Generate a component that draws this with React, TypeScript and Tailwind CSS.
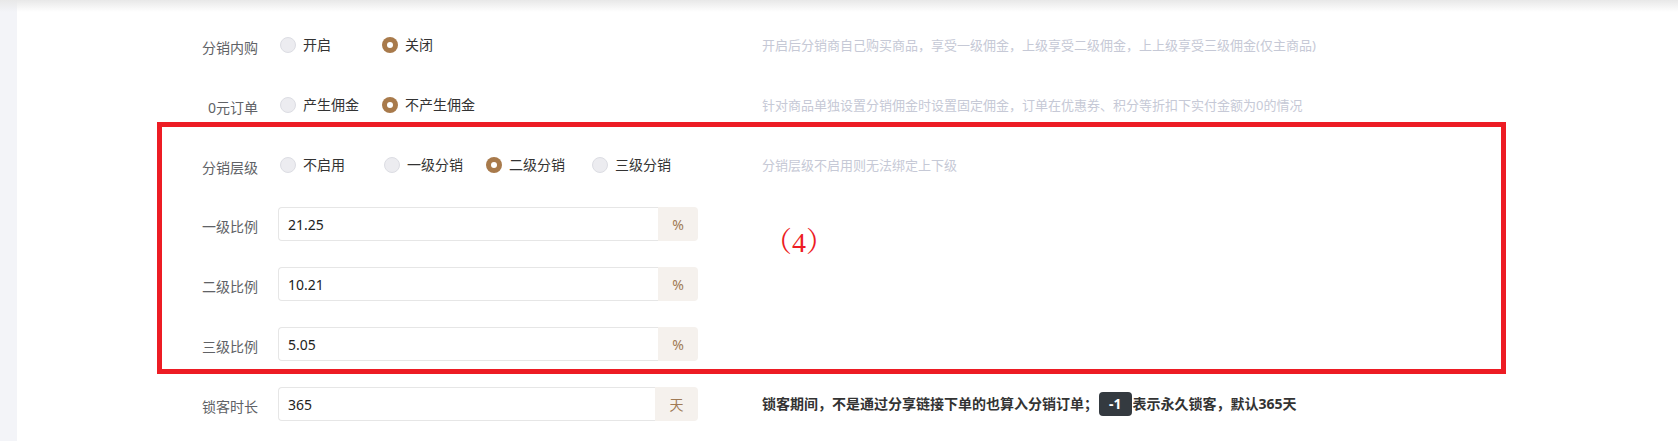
import React from "react";

function Radio({ checked, label, w }: { checked?: boolean; label: string; w: string }) {
  return (
    <div className={`flex items-center gap-[7px] shrink-0 ${w}`}>
      {checked ? (
        <span className="w-4 h-4 rounded-full bg-[#a87a4b] flex items-center justify-center">
          <span className="w-[6px] h-[6px] rounded-full bg-white" />
        </span>
      ) : (
        <span className="w-4 h-4 rounded-full bg-[#ececf0] border border-[#dcdde3]" />
      )}
      <span className="text-[14px] leading-[20px] text-[#333]">{label}</span>
    </div>
  );
}

function Label({ text }: { text: string }) {
  return (
    <div className="w-[100px] shrink-0 mr-[20px] text-right text-[14px] leading-[20px] text-[#606266] pt-[5px]">
      {text}
    </div>
  );
}

function Desc({ text }: { text: string }) {
  return <div className="ml-[64px] text-[13px] leading-[20px] text-[#c6c9d6] whitespace-nowrap">{text}</div>;
}

function InputBox({ value, suffix, sw }: { value: string; suffix: string; sw: string }) {
  return (
    <div className="w-[420px] h-[34px] flex shrink-0">
      <div className="flex-1 h-full border border-r-0 border-[#e6e6e6] rounded-l-[4px] flex items-center pl-[9px] text-[14px] text-[#222]">
        {value}
      </div>
      <div className={`${sw} h-full bg-[#f5f1ed] rounded-r-[4px] flex items-center justify-center text-[14px] text-[#a07a55]`}>
        {suffix}
      </div>
    </div>
  );
}

export default function App() {
  return (
    <div className="relative w-full h-[441px] bg-white overflow-hidden flex font-['Noto_Sans','Noto_Sans_CJK_SC',sans-serif]">
      <div className="w-[17px] shrink-0 bg-[#f3f4f8]" />
      <div className="flex-1 pt-[28px] pl-[141px] flex flex-col gap-[26px]">
        <div className="flex items-center h-[34px]">
          <Label text="分销内购" />
          <div className="w-[420px] flex items-center pl-[2px] shrink-0">
            <Radio label="开启" w="w-[102px]" />
            <Radio label="关闭" checked w="w-[100px]" />
          </div>
          <Desc text="开启后分销商自己购买商品，享受一级佣金，上级享受二级佣金，上上级享受三级佣金(仅主商品)" />
        </div>
        <div className="flex items-center h-[34px]">
          <Label text="0元订单" />
          <div className="w-[420px] flex items-center pl-[2px] shrink-0">
            <Radio label="产生佣金" w="w-[102px]" />
            <Radio label="不产生佣金" checked w="w-[110px]" />
          </div>
          <Desc text="针对商品单独设置分销佣金时设置固定佣金，订单在优惠券、积分等折扣下实付金额为0的情况" />
        </div>
        <div className="flex items-center h-[34px]">
          <Label text="分销层级" />
          <div className="w-[420px] flex items-center pl-[2px] shrink-0">
            <Radio label="不启用" w="w-[104px]" />
            <Radio label="一级分销" w="w-[102px]" />
            <Radio label="二级分销" checked w="w-[106px]" />
            <Radio label="三级分销" w="w-[100px]" />
          </div>
          <Desc text="分销层级不启用则无法绑定上下级" />
        </div>
        <div className="flex items-center h-[34px] mt-[-1px]">
          <Label text="一级比例" />
          <InputBox value="21.25" suffix="%" sw="w-[40px]" />
        </div>
        <div className="flex items-center h-[34px]">
          <Label text="二级比例" />
          <InputBox value="10.21" suffix="%" sw="w-[40px]" />
        </div>
        <div className="flex items-center h-[34px]">
          <Label text="三级比例" />
          <InputBox value="5.05" suffix="%" sw="w-[40px]" />
        </div>
        <div className="flex items-center h-[34px]">
          <Label text="锁客时长" />
          <InputBox value="365" suffix="天" sw="w-[43px]" />
          <div className="ml-[64px] flex items-center text-[14px] leading-[20px] font-bold text-[#333] whitespace-nowrap">
            <span>锁客期间，不是通过分享链接下单的也算入分销订单；</span>
            <span className="ml-[1px] mr-[1px] h-[24px] px-[10px] rounded-[4px] bg-[#343a40] text-white flex items-center">-1</span>
            <span>表示永久锁客，默认365天</span>
          </div>
        </div>
      </div>
      <div className="absolute top-0 left-0 right-0 h-[12px] bg-linear-to-b from-[#e8e8e8] to-transparent pointer-events-none" />
      <div className="absolute left-[157px] top-[122px] w-[1349px] h-[252px] border-[5px] border-[#ed1c24] pointer-events-none" />
      <div className="absolute left-[764px] top-[226px] text-[28px] leading-[34px] text-[#ed1c24] font-['Liberation_Serif','Noto_Serif_CJK_SC','Noto_Sans_CJK_SC',serif]">
        （4）
      </div>
    </div>
  );
}
